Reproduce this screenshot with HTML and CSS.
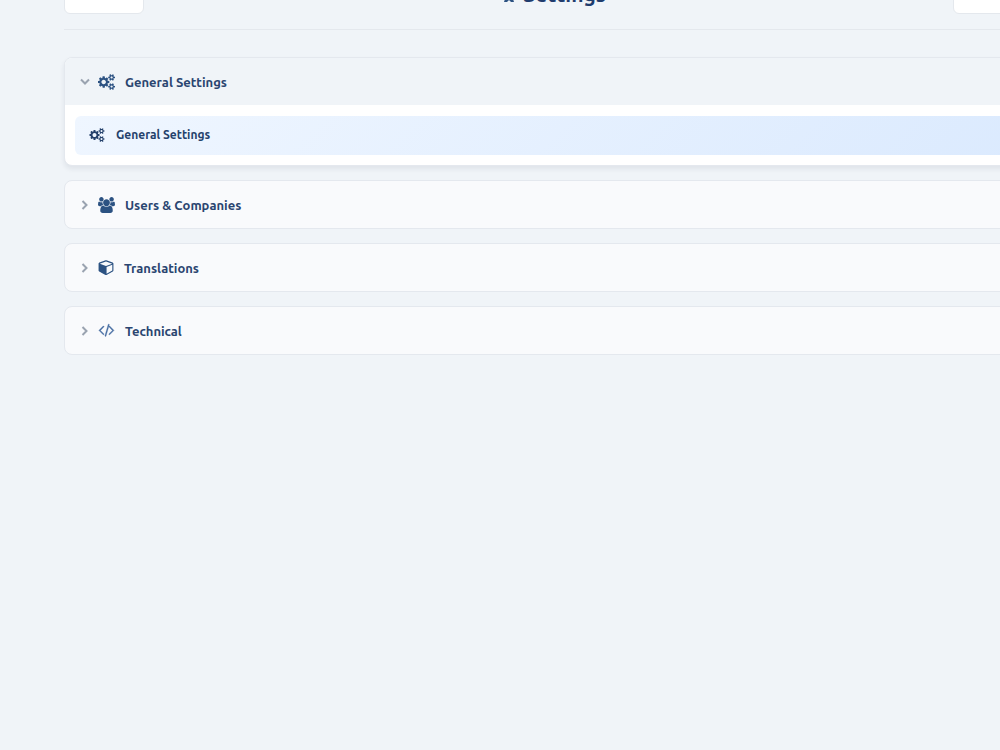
FILE: index.html
```html
<!DOCTYPE html>
<html lang="en">
<head>
<meta charset="utf-8">
<title>Settings</title>
<link rel="stylesheet" href="styles.css">
</head>
<body>
<svg class="sprite" aria-hidden="true">
  <symbol id="cogs" viewBox="0 0 1920 1792"><path d="M896 896q0-106-75-181t-181-75-181 75-75 181 75 181 181 75 181-75 75-181zm768 512q0-52-38-90t-90-38-90 38-38 90q0 53 37.5 90.5t90.5 37.5 90.5-37.5 37.5-90.5zm0-1024q0-52-38-90t-90-38-90 38-38 90q0 53 37.5 90.5T1536 512t90.5-37.5T1664 384zm-384 421v185q0 10-7 19.5t-16 10.5l-155 24q-11 35-32 76 34 48 90 115 7 11 7 20 0 12-7 19-23 30-82.5 89.5T999 1423q-11 0-21-7l-115-90q-37 19-77 31-11 108-23 155-7 24-30 24H547q-11 0-20-7.500t-10-17.500l-23-153q-34-10-75-31l-118 89q-7 7-20 7-11 0-21-8-144-133-144-160 0-9 7-19 10-14 41-53t47-61q-23-44-35-82l-152-24q-10-1-17-9.500T0 987V802q0-10 7-19.500T23 772l155-24q11-35 32-76-34-48-90-115-7-11-7-20 0-12 7-20 22-30 82-89t79-59q11 0 21 7l115 90q34-18 77-32 11-108 23-154 7-24 30-24h186q11 0 20 7.500t10 17.500l23 153q34 10 75 31l118-89q8-7 20-7 11 0 21 8 144 133 144 160 0 8-7 19-12 16-42 54t-45 60q23 48 34 82l152 23q10 2 17 10.500t7 19.500zm640 533v140q0 16-149 31-12 27-30 52 51 113 51 138 0 4-4 7-122 71-124 71-8 0-46-47t-52-68q-20 2-30 2t-30-2q-14 21-52 68t-46 47q-2 0-124-71-4-3-4-7 0-25 51-138-18-25-30-52-149-15-149-31v-140q0-16 149-31 13-29 30-52-51-113-51-138 0-4 4-7 4-2 35-20t59-34 30-16q8 0 46 46.500t52 67.500q20-2 30-2t30 2q51-71 92-112l6-2q4 0 124 70 4 3 4 7 0 25-51 138 17 23 30 52 149 15 149 31zm0-1024v140q0 16-149 31-12 27-30 52 51 113 51 138 0 4-4 7-122 71-124 71-8 0-46-47t-52-68q-20 2-30 2t-30-2q-14 21-52 68t-46 47q-2 0-124-71-4-3-4-7 0-25 51-138-18-25-30-52-149-15-149-31V314q0-16 149-31 13-29 30-52-51-113-51-138 0-4 4-7 4-2 35-20t59-34 30-16q8 0 46 46.500t52 67.500q20-2 30-2t30 2q51-71 92-112l6-2q4 0 124 70 4 3 4 7 0 25-51 138 17 23 30 52 149 15 149 31z"/></symbol>
  <symbol id="users" viewBox="0 0 1920 1792"><path d="M593 896q-162 5-265 128H194q-82 0-138-40.500T0 865q0-353 124-353 6 0 43.500 21t97.500 42.500T384 597q67 0 133-23-5 37-5 66 0 139 81 256zm1071 637q0 120-73 189.500t-194 69.500H523q-121 0-194-69.500T256 1533q0-53 3.500-103.500t14-109T300 1212t43-97.500 62-81 85.500-53.500T602 960q10 0 43 21.500t73 48 107 48 135 21.500 135-21.500 107-48 73-48 43-21.500q61 0 111.500 20t85.500 53.500 62 81 43 97.500 26.500 108.500 14 109 3.500 103.500zM640 256q0 106-75 181t-181 75-181-75-75-181 75-181T384 0t181 75 75 181zm704 384q0 159-112.500 271.500T960 1024 688.500 911.500 576 640t112.500-271.500T960 256t271.500 112.500T1344 640zm576 225q0 78-56 118.500t-138 40.500h-134q-103-123-265-128 81-117 81-256 0-29-5-66 66 23 133 23 59 0 119-21.500t97.500-42.500 43.500-21q124 0 124 353zm-128-609q0 106-75 181t-181 75-181-75-75-181 75-181 181-75 181 75 75 181z"/></symbol>
  <symbol id="cube" viewBox="0 100 1664 1792"><path d="M896 1629l640-349v-636l-640 233v752zM832 765l698-254-698-254-698 254zM1664 512v768q0 35-18 65t-49 47l-704 384q-28 16-61 16t-61-16l-704-384q-31-17-49-47t-18-65v-768q0-40 23-73t61-47l704-256q22-8 44-8t44 8l704 256q38 14 61 47t23 73z"/></symbol>
  <symbol id="code" viewBox="-60 134 1780 1792"><path stroke="currentColor" stroke-width="36" d="M553 1399l-50 50q-10 10-23 10t-23-10l-466-466q-10-10-10-23t10-23l466-466q10-10 23-10t23 10l50 50q10 10 10 23t-10 23l-393 393 393 393q10 10 10 23t-10 23zM1144 319l-373 1291q-4 13-15.500 19.500t-23.500 2.500l-62-17q-13-4-19.500-15.500t-2.500-24.500l373-1291q4-13 15.500-19.500t23.500-2.500l62 17q13 4 19.500 15.500t2.500 24.500zM1657 983l-466 466q-10 10-23 10t-23-10l-50-50q-10-10-10-23t10-23l393-393-393-393q-10-10-10-23t10-23l50-50q10-10 23-10t23 10l466 466q10 10 10 23t-10 23z"/></symbol>
  <symbol id="chevron" viewBox="0 0 10 10"><path d="M2.500 1L6.500 5 2.500 9" fill="none" stroke="currentColor" stroke-width="2"/></symbol>
  <symbol id="user" viewBox="0 0 16 16"><path d="M8 0a4 4 0 0 1 2 7l1 3 2 6h-3l-2-2-2 2H3l2-6 1-3a4 4 0 0 1 2-7z"/></symbol>
</svg>
<main class="page">
  <header class="toolbar">
    <button class="tool" type="button" aria-label="Back"></button>
    <h1 class="title"><svg class="title-icon"><use href="#user"/></svg>Settings</h1>
    <button class="tool tool-wide" type="button" aria-label="Options"></button>
  </header>
  <div class="groups">
    <section class="group group-open">
      <button class="group-head" type="button" aria-expanded="true"><svg class="chevron"><use href="#chevron"/></svg><svg class="icon"><use href="#cogs"/></svg>General Settings</button>
      <div class="group-body">
        <a class="item" href="#general"><svg class="item-icon"><use href="#cogs"/></svg>General Settings</a>
      </div>
    </section>
    <section class="group">
      <button class="group-head" type="button" aria-expanded="false"><svg class="chevron"><use href="#chevron"/></svg><svg class="icon"><use href="#users"/></svg>Users &amp; Companies</button>
    </section>
    <section class="group">
      <button class="group-head" type="button" aria-expanded="false"><svg class="chevron"><use href="#chevron"/></svg><svg class="icon icon-cube"><use href="#cube"/></svg>Translations</button>
    </section>
    <section class="group">
      <button class="group-head" type="button" aria-expanded="false"><svg class="chevron"><use href="#chevron"/></svg><svg class="icon icon-code"><use href="#code"/></svg>Technical</button>
    </section>
  </div>
</main>
</body>
</html>
```
FILE: styles.css
```css
* { box-sizing: border-box; }
body {
  margin: 0;
  min-height: 100vh;
  overflow: hidden;
  background: #f0f4f8;
  color: #2a4570;
  font-family: Ubuntu, "Noto Sans", "Open Sans", sans-serif;
}
svg { fill: currentColor; flex: none; }
.sprite { position: absolute; width: 0; height: 0; }
.page { margin: -26px -40px 0 64px; }
.toolbar {
  display: flex;
  justify-content: space-between;
  align-items: flex-start;
  padding-bottom: 15px;
  border-bottom: 1px solid #e4e8ed;
}
.tool {
  width: 80px;
  height: 40px;
  border: 1px solid #e4e8ed;
  border-radius: 6px;
  background: #fff;
}
.tool-wide { width: 87px; }
.title {
  display: flex;
  align-items: center;
  gap: 6px;
  margin: 6px 0 0;
  padding-left: 10px;
  font-size: 21px;
  line-height: 28px;
  font-weight: 700;
  color: #1f3c6e;
}
.title-icon { width: 16px; height: 16px; color: #2c5282; }
.groups {
  display: flex;
  flex-direction: column;
  gap: 14px;
  padding-top: 27px;
}
.group {
  border: 1px solid #e4e8ee;
  border-radius: 8px;
  background: #f9fafc;
  overflow: hidden;
}
.group-open {
  background: #fff;
  box-shadow: 0 3px 5px rgba(30, 41, 59, 0.08);
}
.group-head {
  display: flex;
  align-items: center;
  width: 100%;
  height: 47px;
  padding: 0 15px;
  border: 0;
  background: none;
  color: inherit;
  font: 700 13px/20px Ubuntu, "Noto Sans", "Open Sans", sans-serif;
  text-align: left;
}
.group-open .group-head { background: #f0f4f8; }
.chevron { width: 10px; height: 10px; margin-right: 8px; color: #9aa3b0; }
.group-open .chevron { transform: rotate(90deg); }
.icon { width: 17px; height: 16px; margin-right: 10px; color: #2c5282; }
.icon-cube { width: 16px; }
.icon-code { color: #4a70a5; }
.group-body { padding: 11px 10px 10px; }
.item {
  display: flex;
  align-items: center;
  gap: 11px;
  height: 39px;
  padding: 0 14px 2px;
  border-radius: 6px;
  background: linear-gradient(135deg, #eff6ff, #dbeafe);
  color: #24416b;
  font-size: 12px;
  line-height: 20px;
  font-weight: 700;
  text-decoration: none;
}
.item-icon { width: 16px; height: 14px; }
```
